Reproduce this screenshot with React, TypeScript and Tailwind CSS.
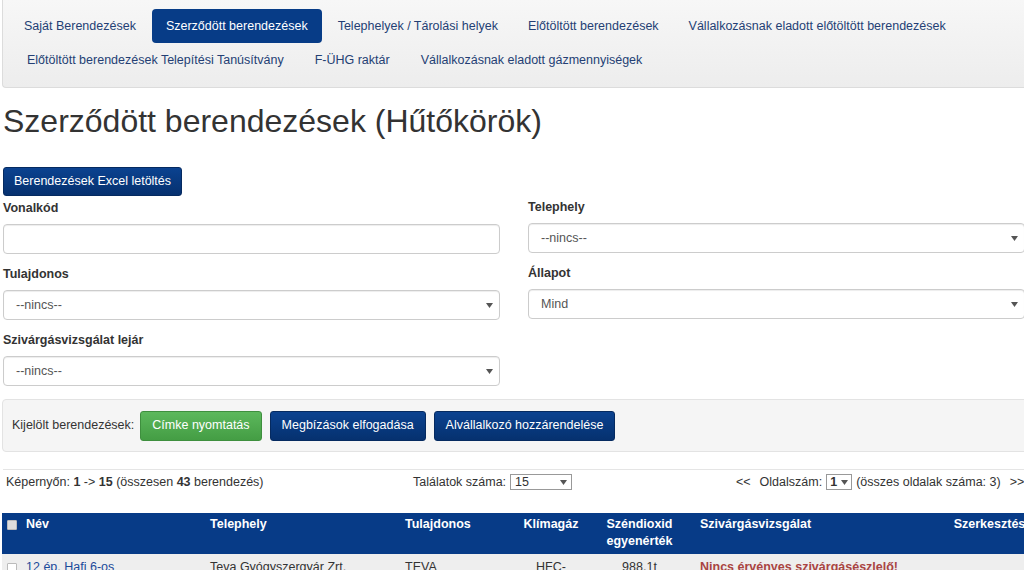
const navRow1 = [
  { label: "Saját Berendezések" },
  { label: "Szerződött berendezések", active: true },
  { label: "Telephelyek / Tárolási helyek" },
  { label: "Előtöltött berendezések" },
  { label: "Vállalkozásnak eladott előtöltött berendezések" },
];

const navRow2 = [
  { label: "Előtöltött berendezések Telepítési Tanúsítvány" },
  { label: "F-ÜHG raktár" },
  { label: "Vállalkozásnak eladott gázmennyiségek" },
];

const Caret = () => (
  <svg width="7" height="5" viewBox="0 0 7 5" className="shrink-0">
    <path d="M0 0 L7 0 L3.5 5 Z" fill="#555" />
  </svg>
);

const NavLink = ({ label, active }: { label: string; active?: boolean }) => (
  <a
    className={
      active
        ? "px-[14px] h-[34px] flex items-center rounded-[4px] bg-[#073c87] text-white"
        : "px-[14px] h-[34px] flex items-center text-[#243f74]"
    }
  >
    {label}
  </a>
);

const Field = ({
  label,
  value,
  select = true,
}: {
  label: string;
  value?: string;
  select?: boolean;
}) => (
  <div className="flex flex-col">
    <label className="font-bold text-[12.5px] text-[#333] h-[16px] leading-[16px] mb-[8px]">
      {label}
    </label>
    <div className="h-[30px] border border-[#ccc] rounded-[4px] bg-white shadow-[inset_0_1px_1px_rgba(0,0,0,0.075)] flex items-center justify-between pl-[12px] pr-[6px] text-[12.5px] text-[#555]">
      <span>{value}</span>
      {select && <Caret />}
    </div>
  </div>
);

const Th = ({ children, className = "" }: { children?: React.ReactNode; className?: string }) => (
  <th className={"pr-[6px] pt-[3px] pb-[4px] align-top font-bold text-white text-[12.5px] leading-[17px] " + className}>
    {children}
  </th>
);

const Td = ({ children, className = "" }: { children?: React.ReactNode; className?: string }) => (
  <td className={"pr-[6px] pt-[5px] align-top text-[12.5px] leading-[17px] text-[#333] " + className}>
    {children}
  </td>
);

export default function App() {
  return (
    <div className="w-full h-[570px] overflow-hidden bg-white" style={{ fontFamily: '"Liberation Sans", Arial, sans-serif' }}>
      <div className="w-[1060px]">
        {/* navbar */}
        <div className="ml-[2px] w-[1040px] border-l border-b border-[#dcdcdc] bg-gradient-to-b from-[#f7f7f7] to-[#ededed] rounded-bl-[4px] pt-[9px] pb-[10px] pl-[7px] text-[12.5px]">
          <div className="flex gap-[2px]">
            {navRow1.map((n) => (
              <NavLink key={n.label} {...n} />
            ))}
          </div>
          <div className="flex gap-[3px] pl-[3px]">
            {navRow2.map((n) => (
              <NavLink key={n.label} {...n} />
            ))}
          </div>
        </div>

        <div className="pl-[3px]">
          <h1 className="text-[32px] leading-[36px] text-[#333] mt-[15px] mb-[28px]">
            Szerződött berendezések (Hűtőkörök)
          </h1>

          <button className="h-[29px] px-[10px] rounded-[3px] bg-gradient-to-b from-[#0b4290] to-[#06316f] border border-[#052a60] text-white text-[12.5px]">
            Berendezések Excel letöltés
          </button>

          <div className="grid grid-cols-[497px_497px] gap-x-[28px] mt-[4px]">
            <div className="flex flex-col gap-[12px]">
              <Field label="Vonalkód" select={false} />
              <Field label="Tulajdonos" value="--nincs--" />
              <Field label="Szivárgásvizsgálat lejár" value="--nincs--" />
            </div>
            <div className="flex flex-col gap-[12px] -mt-[1px]">
              <Field label="Telephely" value="--nincs--" />
              <Field label="Állapot" value="Mind" />
            </div>
          </div>
        </div>

        {/* selected actions */}
        <div className="ml-[2px] mt-[13px] h-[53px] border border-[#e3e3e3] rounded-[4px] bg-[#f5f5f5] flex items-center pl-[9px] gap-[8px] text-[12.5px]">
          <span className="text-[#333] -mr-[2px]">Kijelölt berendezések:</span>
          <button className="h-[30px] px-[11px] rounded-[3px] bg-gradient-to-b from-[#5cb85c] to-[#449d44] border border-[#3e8f3e] text-white text-[12.5px]">
            Címke nyomtatás
          </button>
          <button className="h-[30px] px-[11px] rounded-[3px] bg-gradient-to-b from-[#0b4290] to-[#06316f] border border-[#052a60] text-white text-[12.5px]">
            Megbízások elfogadása
          </button>
          <button className="h-[30px] px-[11px] rounded-[3px] bg-gradient-to-b from-[#0b4290] to-[#06316f] border border-[#052a60] text-white text-[12.5px]">
            Alvállalkozó hozzárendelése
          </button>
        </div>

        <div className="ml-[3px] mt-[17px] border-t border-[#e5e5e5]" />

        {/* pager info */}
        <div className="relative h-[22px] text-[12.5px] text-[#333]">
          <div className="absolute left-[6px] top-[3px]">
            Képernyőn: <b>1</b> -&gt; <b>15</b> (összesen <b>43</b> berendezés)
          </div>
          <div className="absolute left-[413px] top-[3px] flex items-center gap-[4px]">
            <span>Találatok száma:</span>
            <span className="h-[16px] w-[62px] border border-[#999] bg-white flex items-center justify-between px-[4px] leading-[14px]">
              <span>15</span>
              <Caret />
            </span>
          </div>
          <div className="absolute left-[736px] top-[3px] flex items-center gap-[4px] whitespace-nowrap">
            <span className="mr-[5px]">&lt;&lt;</span>
            <span>Oldalszám:</span>
            <span className="h-[16px] w-[26px] border border-[#999] bg-white flex items-center justify-between px-[3px] leading-[14px]">
              <b>1</b>
              <Caret />
            </span>
            <span>(összes oldalak száma: 3)</span>
            <span className="ml-[5px]">&gt;&gt;</span>
          </div>
        </div>

        {/* table */}
        <table className="ml-[2px] mt-[21px] table-fixed border-collapse w-[1055px]">
          <colgroup>
            <col className="w-[18px]" />
            <col className="w-[184px]" />
            <col className="w-[195px]" />
            <col className="w-[106px]" />
            <col className="w-[92px]" />
            <col className="w-[85px]" />
            <col className="w-[240px]" />
            <col className="w-[135px]" />
          </colgroup>
          <thead className="bg-[#073b87]">
            <tr className="h-[40px]">
              <th className="pl-[5px] pt-[7px] align-top text-left">
                <span className="block w-[10px] h-[10px] bg-[#ddd] border border-[#bbb] rounded-[1px]" />
              </th>
              <Th className="text-left pl-[6px]">Név</Th>
              <Th className="text-left pl-[6px]">Telephely</Th>
              <Th className="text-left pl-[6px]">Tulajdonos</Th>
              <Th className="text-center pl-[6px]">Klímagáz</Th>
              <Th className="text-center pl-[6px]">Széndioxid egyenérték</Th>
              <Th className="text-left pl-[18px]">Szivárgásvizsgálat</Th>
              <Th className="text-center pl-[6px]">Szerkesztés</Th>
            </tr>
          </thead>
          <tbody>
            <tr className="bg-[#eeeeee] h-[40px]">
              <td className="pl-[5px] pt-[9px] align-top">
                <span className="block w-[10px] h-[10px] bg-white border border-[#bbb] rounded-[1px]" />
              </td>
              <Td className="text-left pl-[6px]">
                <a className="text-[#1a4a9a]">12 ép. Hafi 6-os</a>
              </Td>
              <Td className="text-left pl-[6px]">Teva Gyógyszergyár Zrt.</Td>
              <Td className="text-left pl-[6px]">TEVA</Td>
              <Td className="text-center pl-[6px]">HFC-</Td>
              <Td className="text-center pl-[6px]">988,1t</Td>
              <Td className="text-left pl-[18px] font-bold text-[#a94442]">Nincs érvényes szivárgásészlelő!</Td>
              <Td className="pl-[6px]" />
            </tr>
          </tbody>
        </table>
      </div>
    </div>
  );
}
